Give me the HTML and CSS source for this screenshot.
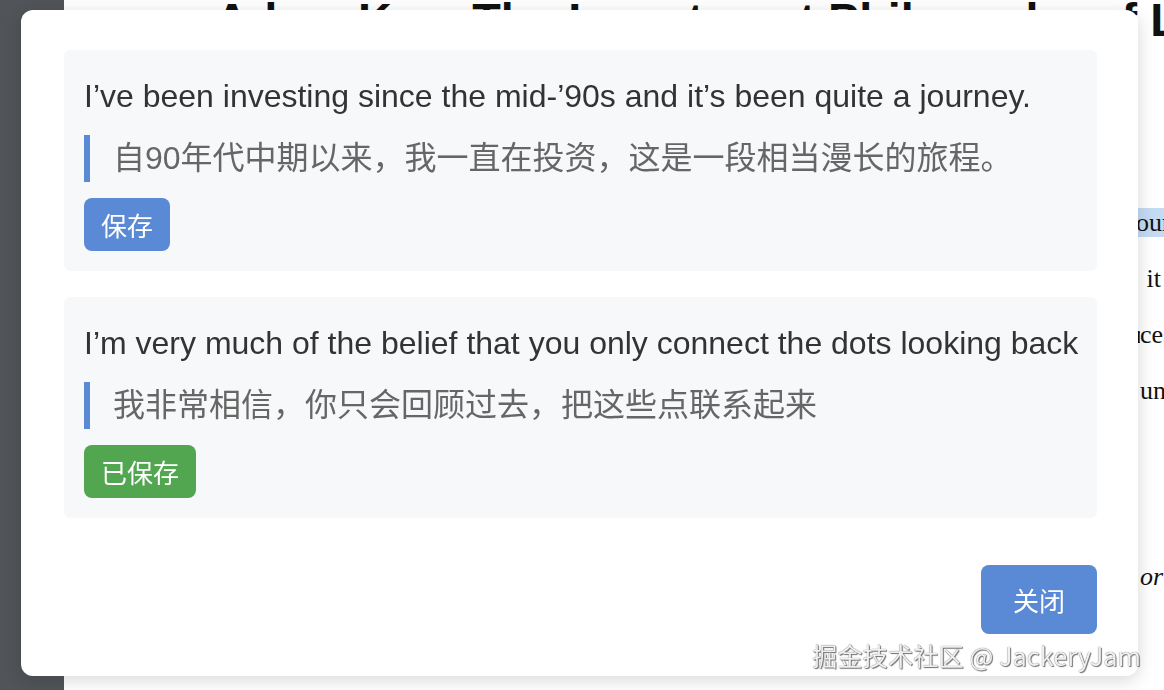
FILE: index.html
```html
<!DOCTYPE html>
<html lang="zh-CN">
<head>
<meta charset="utf-8">
<title>Adam Kay: The Investment Philosophy</title>
<link rel="stylesheet" href="styles.css">
</head>
<body>
<div class="app">
  <aside class="sidebar"></aside>
  <main class="page">
    <h1 class="title">Adam Kay: The Investment Philosophy of Legends</h1>
    <article class="article">
      <p class="para">
        <span class="ln"><span class="lead lead-first">I started with very little money, and the first years were a hard lesson for me and</span><span class="tail"><mark class="sel">our</mark> journey</span></span>
        <span class="ln"><span class="lead">Looking back, I can say that every mistake taught me something, and</span><span class="tail"> it was</span></span>
        <span class="ln"><span class="lead">I learned to trust the process more than the short-term successes and failures, the experien</span><span class="tail">ces of</span></span>
        <span class="ln"><span class="lead">those who came before me mattered, and I kept reading and learning, never stopping</span><span class="tail">until</span></span>
        <span class="ln"><span class="lead">the day it all began to make sense, and the pieces fell into place.</span><span class="tail"></span></span>
        <span class="ln"><span class="lead">That is how it goes.</span><span class="tail"></span></span>
      </p>
      <p class="para">
        <span class="ln"><span class="lead">The philosophy is simple: patience is everything, and conviction matters f</span><span class="tail"><em>or</em> us</span></span>
      </p>
    </article>
  </main>
</div>

<div class="modal" role="dialog" aria-modal="true">
  <section class="card">
    <p class="en">I’ve been investing since the mid-’90s and it’s been quite a journey.</p>
    <p class="zh">自90年代中期以来，我一直在投资，这是一段相当漫长的旅程。</p>
    <button class="btn btn-blue">保存</button>
  </section>
  <section class="card">
    <p class="en">I’m very much of the belief that you only connect the dots looking back</p>
    <p class="zh">我非常相信，你只会回顾过去，把这些点联系起来</p>
    <button class="btn btn-green">已保存</button>
  </section>
  <div class="actions">
    <button class="btn btn-blue btn-close">关闭</button>
  </div>
</div>

<div class="watermark">掘金技术社区 @ JackeryJam</div>
</body>
</html>
```

FILE: styles.css
```css
html, body {
  margin: 0;
  padding: 0;
  height: 100%;
  overflow: hidden;
  background: #fff;
}

body {
  font-family: "Liberation Sans", Arial, "Noto Sans CJK SC", sans-serif;
}

.app {
  display: flex;
  height: 100vh;
}

.sidebar {
  width: 64px;
  flex: 0 0 64px;
  background: #515458;
}

.page {
  flex: 1;
  padding-left: 151px;
  overflow: hidden;
  background: #fff;
}

.title {
  margin: 0;
  font-family: "Liberation Sans", Arial, sans-serif;
  font-weight: 700;
  font-size: 46.75px;
  line-height: 40px;
  color: #111;
  white-space: nowrap;
}

.article {
  margin-top: 155px;
  font-family: "Liberation Serif", "Times New Roman", serif;
  font-size: 26px;
  line-height: 56px;
  color: #111;
}

.para {
  margin: 0 0 18px;
}

.ln {
  display: flex;
  white-space: nowrap;
}

.lead {
  width: 925px;
  flex: 0 0 925px;
  overflow: hidden;
}

.lead-first {
  width: 921px;
  flex-basis: 921px;
}

.tail {
  white-space: pre;
}

.sel {
  background: #c4dbf4;
  color: #111;
}

/* Modal */
.modal {
  position: fixed;
  left: 21px;
  top: 10px;
  width: 1117px;
  box-sizing: border-box;
  padding: 40px 41px 42px 43px;
  background: #fff;
  border-radius: 12px;
  box-shadow: 0 4px 18px rgba(0, 0, 0, 0.16);
  display: flex;
  flex-direction: column;
}

.card {
  background: #f7f8fa;
  border-radius: 6px;
  padding: 22px 20px 20px;
  display: flex;
  flex-direction: column;
  align-items: flex-start;
}

.card + .card {
  margin-top: 26px;
}

.en {
  margin: 0;
  font-size: 32px;
  line-height: 48px;
  color: #333;
  white-space: nowrap;
}

.zh {
  margin: 15px 0 0;
  padding-left: 23px;
  border-left: 6px solid #5a8ad5;
  font-family: "Liberation Sans", "Noto Sans CJK SC", sans-serif;
  font-size: 32px;
  line-height: 47px;
  color: #666;
  white-space: nowrap;
}

.btn {
  border: 0;
  margin: 16px 0 0;
  height: 53px;
  padding: 0 17px;
  border-radius: 8px;
  font-family: "Noto Sans CJK SC", sans-serif;
  font-size: 26px;
  line-height: 53px;
  color: #fff;
  cursor: pointer;
}

.btn-blue {
  background: #5a8ad5;
}

.btn-green {
  background: #52a650;
}

.actions {
  margin-top: 47px;
  display: flex;
  justify-content: flex-end;
}

.btn-close {
  margin: 0;
  height: 69px;
  line-height: 69px;
  padding: 0 32px;
}

.watermark {
  position: fixed;
  right: 23px;
  bottom: 20px;
  font-family: "Noto Sans CJK SC", sans-serif;
  font-size: 25.3px;
  line-height: 30px;
  color: #f0f0f0;
  text-shadow: 0 0 1px #444, 1px 1px 1px rgba(0, 0, 0, 0.55);
  white-space: nowrap;
}
```
